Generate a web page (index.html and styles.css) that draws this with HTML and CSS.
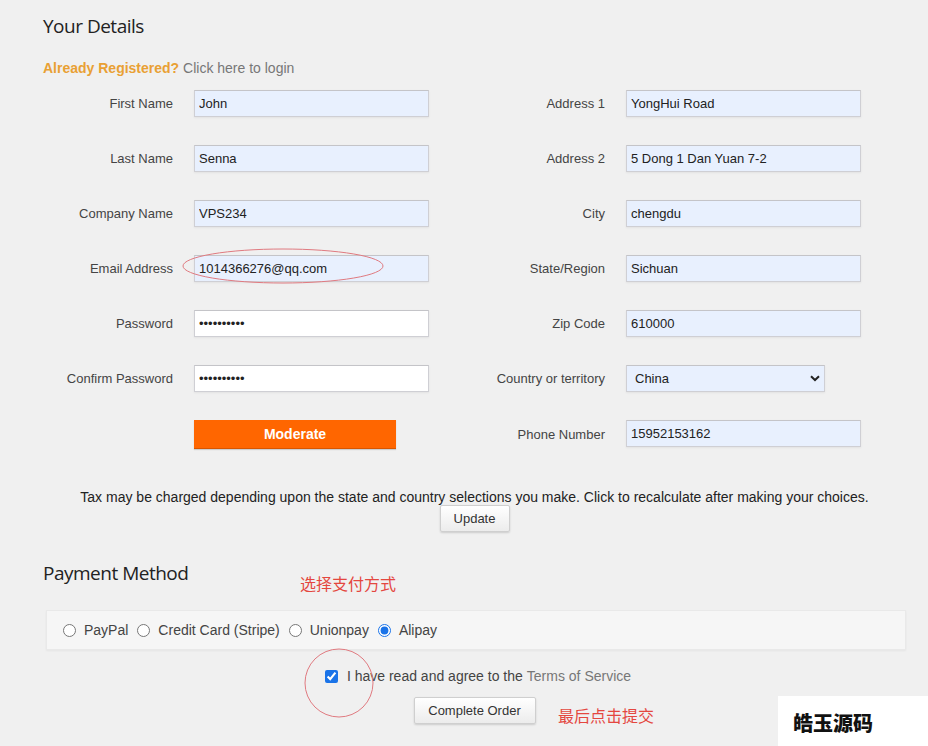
FILE: index.html
```html
<!DOCTYPE html>
<html lang="en">
<head>
<meta charset="utf-8">
<title>Checkout</title>
<link rel="stylesheet" href="styles.css">
</head>
<body>
<div class="page">
  <h2 class="heading">Your Details</h2>
  <p class="login"><span class="login-q">Already Registered?</span> <a class="login-link" href="#">Click here to login</a></p>

  <form class="details">
    <label class="lbl">First Name</label>
    <input class="field" type="text" value="John">
    <label class="lbl">Address 1</label>
    <input class="field" type="text" value="YongHui Road">

    <label class="lbl">Last Name</label>
    <input class="field" type="text" value="Senna">
    <label class="lbl">Address 2</label>
    <input class="field" type="text" value="5 Dong 1 Dan Yuan 7-2">

    <label class="lbl">Company Name</label>
    <input class="field" type="text" value="VPS234">
    <label class="lbl">City</label>
    <input class="field" type="text" value="chengdu">

    <label class="lbl">Email Address</label>
    <input class="field" type="text" value="1014366276@qq.com">
    <label class="lbl">State/Region</label>
    <input class="field" type="text" value="Sichuan">

    <label class="lbl">Password</label>
    <input class="field field-white" type="password" value="1234567890">
    <label class="lbl">Zip Code</label>
    <input class="field" type="text" value="610000">

    <label class="lbl">Confirm Password</label>
    <input class="field field-white" type="password" value="1234567890">
    <label class="lbl">Country or territory</label>
    <select class="field select"><option>China</option></select>

    <span></span>
    <div class="strength">Moderate</div>
    <label class="lbl">Phone Number</label>
    <input class="field field-top" type="text" value="15952153162">
  </form>

  <div class="tax">
    <p class="tax-text">Tax may be charged depending upon the state and country selections you make. Click to recalculate after making your choices.</p>
    <button class="btn" type="button">Update</button>
  </div>

  <h2 class="heading heading-pay">Payment Method</h2>

  <div class="paybox">
    <label class="opt"><input type="radio" name="pay"> PayPal</label>
    <label class="opt"><input type="radio" name="pay"> Credit Card (Stripe)</label>
    <label class="opt"><input type="radio" name="pay"> Unionpay</label>
    <label class="opt"><input type="radio" name="pay" checked> Alipay</label>
  </div>

  <div class="agree">
    <label class="agree-line"><input type="checkbox" checked> I have read and agree to the <a class="tos" href="#">Terms of Service</a></label>
    <button class="btn btn-order" type="button">Complete Order</button>
  </div>
</div>

<svg class="mark-email" width="204" height="38" viewBox="0 0 204 38"><ellipse cx="102" cy="19" rx="100" ry="17" fill="none" stroke="#e07a80" stroke-width="1"/></svg>
<svg class="mark-check" width="72" height="72" viewBox="0 0 72 72"><circle cx="36" cy="36" r="34" fill="none" stroke="#e07a80" stroke-width="1"/></svg>
<div class="note note-pay">选择支付方式</div>
<div class="note note-submit">最后点击提交</div>
<div class="watermark">皓玉源码</div>
</body>
</html>
```

FILE: styles.css
```css
html, body {
  margin: 0;
  padding: 0;
}
body {
  background: #f0f0f0;
  font-family: "Liberation Sans", Arial, sans-serif;
  font-size: 14px;
  color: #444;
  width: 928px;
  height: 746px;
  overflow: hidden;
  position: relative;
}
.page {
  width: 863px;
  padding: 13px 0 0 43px;
}
.heading {
  margin: 0;
  font-family: "Open Sans", "Noto Sans", sans-serif;
  font-weight: 400;
  font-size: 19px;
  line-height: 26px;
  color: #222;
  letter-spacing: -0.5px;
}
.login {
  margin: 21px 0 0;
  line-height: 16px;
}
.login-q {
  color: #e9a034;
  font-weight: 700;
}
.login-link {
  color: #777;
  text-decoration: none;
}
.details {
  margin-top: 14px;
  display: grid;
  grid-template-columns: 130px 235px 155px 235px;
  column-gap: 21px;
  row-gap: 28px;
  align-items: center;
}
.lbl {
  text-align: right;
  color: #444;
  font-size: 13px;
  white-space: nowrap;
}
.field {
  box-sizing: border-box;
  width: 235px;
  height: 27px;
  margin: 0;
  padding: 0 4px;
  font-family: "Liberation Sans", Arial, sans-serif;
  font-size: 13px;
  color: #222;
  background: #e8f0fe;
  border: 1px solid #cfcfd4;
  border-top-color: #c4c4c8;
  box-shadow: 0 1px 2px rgba(0,0,0,0.06);
  outline: none;
}
.field-white {
  background: #fff;
}
.field-top {
  align-self: start;
}
.select {
  width: 199px;
  padding-left: 8px;
  -webkit-appearance: none;
  appearance: none;
  background: #e8f0fe url("data:image/svg+xml;utf8,<svg xmlns='http://www.w3.org/2000/svg' width='10' height='7' viewBox='0 0 10 7'><path d='M1 1.2 L5 5 L9 1.2' fill='none' stroke='%23222' stroke-width='2'/></svg>") no-repeat right 4px center;
}
.strength {
  box-sizing: border-box;
  width: 202px;
  height: 29px;
  background: #ff6600;
  border-bottom: 1px solid #d85600;
  color: #fff;
  font-weight: 700;
  font-size: 14px;
  text-align: center;
  line-height: 29px;
  box-shadow: 0 1px 1px rgba(0,0,0,0.15);
}
.tax {
  margin-top: 40px;
  display: flex;
  flex-direction: column;
  align-items: center;
}
.tax-text {
  margin: 0;
  line-height: 16px;
  color: #222;
}
.btn {
  font-family: "Liberation Sans", Arial, sans-serif;
  font-size: 13px;
  color: #333;
  height: 27px;
  padding: 0 10px;
  background: linear-gradient(#ffffff, #ececec);
  border: 1px solid #cfcfcf;
  border-radius: 2px;
  box-shadow: 0 1px 2px rgba(0,0,0,0.15);
}
.tax .btn {
  width: 70px;
  padding: 0;
}
.heading-pay {
  margin-top: 28px;
}
.paybox {
  box-sizing: border-box;
  margin: 24px 0 0 3px;
  width: 860px;
  height: 40px;
  background: #f6f6f6;
  border: 1px solid #e9e9e9;
  box-shadow: 0 1px 2px rgba(0,0,0,0.05);
  display: flex;
  align-items: center;
  padding-left: 12px;
  gap: 5px;
}
.opt {
  display: flex;
  align-items: center;
  color: #444;
}
.opt input {
  margin: 0 8px 0 4px;
  width: 13px;
  height: 13px;
  accent-color: #1a73e8;
}
.agree {
  display: flex;
  flex-direction: column;
  align-items: center;
  margin-top: 18px;
  gap: 13px;
}
.agree-line {
  display: flex;
  align-items: center;
  line-height: 16px;
  margin-left: 7px;
  color: #444;
}
.agree-line input {
  margin: 0 9px 0 0;
  width: 13px;
  height: 13px;
  accent-color: #1a73e8;
}
.tos {
  color: #777;
  text-decoration: none;
  margin-left: 4px;
}
.btn-order {
  width: 122px;
  padding: 0;
}
.mark-email {
  position: absolute;
  left: 181px;
  top: 247px;
}
.mark-check {
  position: absolute;
  left: 303px;
  top: 647px;
}
.note {
  position: absolute;
  font-family: "Noto Sans CJK SC", sans-serif;
  font-size: 16px;
  line-height: 20px;
  color: #e4473f;
}
.note-pay {
  left: 300px;
  top: 573px;
}
.note-submit {
  left: 558px;
  top: 705px;
}
.watermark {
  position: absolute;
  left: 778px;
  top: 696px;
  width: 150px;
  height: 50px;
  box-sizing: border-box;
  background: #fff;
  padding: 14px 0 0 15px;
  font-family: "Noto Sans CJK SC", sans-serif;
  font-weight: 900;
  font-size: 20px;
  line-height: 26px;
  color: #111;
}
```
